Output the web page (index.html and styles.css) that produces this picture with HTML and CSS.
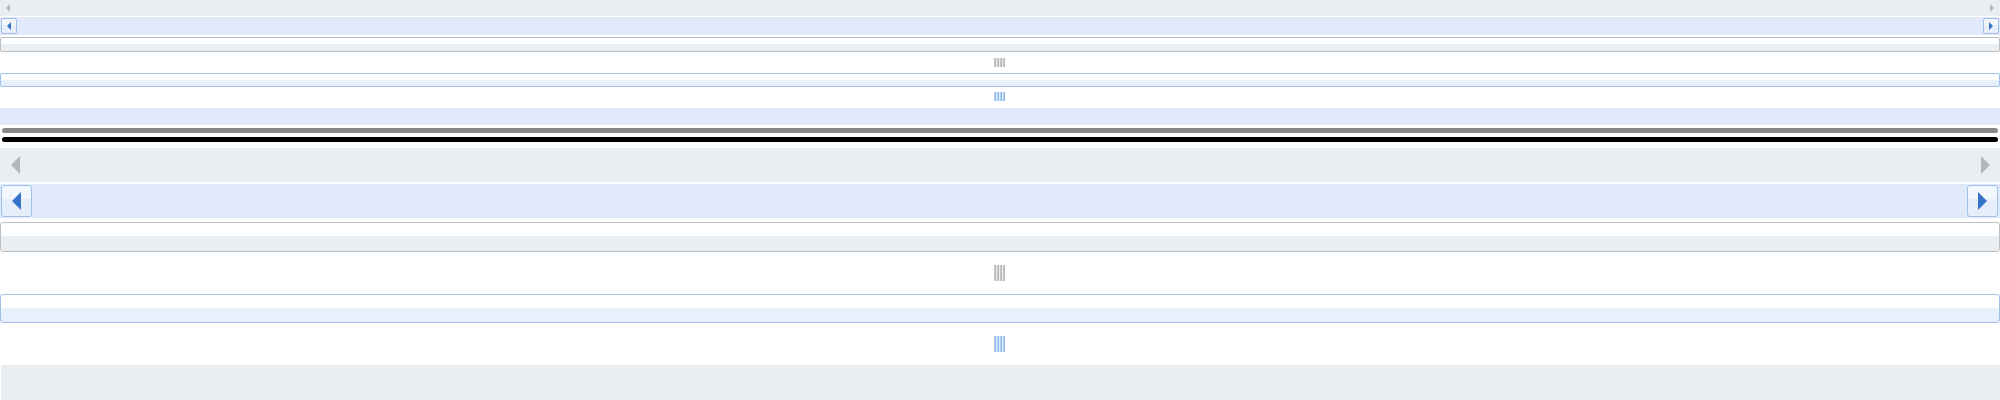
FILE: index.html
```html
<!DOCTYPE html>
<html>
<head>
<meta charset="utf-8">
<link rel="stylesheet" href="styles.css">
</head>
<body>
<div class="page">
  <div class="scroller gray sm">
    <span class="arrow left sm gray-a"></span>
    <span class="arrow right sm gray-a"></span>
  </div>
  <div class="scroller blue sm">
    <span class="btn sm"><span class="arrow left sm blue-a"></span></span>
    <span class="btn sm"><span class="arrow right sm blue-a"></span></span>
  </div>
  <div class="box gray-box sm"></div>
  <div class="splitter sm"><span class="grip gray-grip sm"></span></div>
  <div class="box blue-box sm"></div>
  <div class="splitter sm2"><span class="grip blue-grip sm"></span></div>
  <div class="bar-blue"></div>
  <div class="bar-gray"></div>
  <div class="bar-black"></div>

  <div class="scroller gray lg">
    <span class="arrow left lg gray-a"></span>
    <span class="arrow right lg gray-a"></span>
  </div>
  <div class="scroller blue lg">
    <span class="btn lg"><span class="arrow left lg blue-a"></span></span>
    <span class="btn lg"><span class="arrow right lg blue-a"></span></span>
  </div>
  <div class="box gray-box lg"></div>
  <div class="splitter lg"><span class="grip gray-grip lg"></span></div>
  <div class="box blue-box lg"></div>
  <div class="splitter lg"><span class="grip blue-grip lg"></span></div>
  <div class="bottom-gray"></div>
</div>
</body>
</html>
```
FILE: styles.css
```css
html, body {
  margin: 0;
  padding: 0;
  background: #ffffff;
  overflow: hidden;
}
.page {
  width: 2000px;
  height: 400px;
  display: flex;
  flex-direction: column;
}
.scroller {
  display: flex;
  justify-content: space-between;
  align-items: center;
  box-sizing: border-box;
  flex: none;
}
.scroller.gray { background: #e9eef2; }
.scroller.blue { background: #dfe9f9; }

.scroller.gray.sm { height: 16px; padding: 0 6px 0 6px; }
.scroller.blue.sm { height: 18px; margin-top: 1px; padding: 0 1px 0 1px; }
.scroller.gray.lg { height: 34px; margin-top: 6px; padding: 0 10px 0 11px; }
.scroller.blue.lg { height: 34px; margin-top: 2px; padding: 0 2px 0 1px; }

.btn {
  box-sizing: border-box;
  display: flex;
  align-items: center;
  justify-content: center;
  border: 1px solid #a0c0e8;
  background: linear-gradient(#f2f7fd 0, #f2f7fd 45%, #e6eefa 45%, #e6eefa 100%);
}
.btn.sm { width: 16px; height: 16px; border-radius: 2px; }
.btn.lg { width: 31px; height: 32px; border-radius: 3px; }

.arrow {
  display: block;
  width: 0;
  height: 0;
  border-style: solid;
  border-color: transparent;
}
.arrow.sm { border-width: 4px 0; }
.arrow.lg { border-width: 9px 0; }
.arrow.left.sm { border-right-width: 4px; }
.arrow.right.sm { border-left-width: 4px; }
.arrow.left.lg { border-right-width: 9px; }
.arrow.right.lg { border-left-width: 9px; }
.gray-a.left { border-right-color: #b3b7bb; }
.gray-a.right { border-left-color: #b3b7bb; }
.blue-a.left { border-right-color: #3572c8; }
.blue-a.right { border-left-color: #3572c8; }

.box {
  box-sizing: border-box;
  flex: none;
  border: 1px solid;
}
.gray-box {
  border-color: #bcbfc2;
  background: linear-gradient(#ffffff 0, #ffffff 48%, #e9eef2 48%, #e9eef2 100%);
}
.blue-box {
  border-color: #9fc0e9;
  background: linear-gradient(#ffffff 0, #ffffff 48%, #e8f0fb 48%, #e8f0fb 100%);
}
.gray-box.sm { height: 15px; margin-top: 2px; border-radius: 2px; }
.blue-box.sm { height: 14px; border-radius: 2px; }
.gray-box.lg { height: 30px; margin-top: 4px; border-radius: 3px; }
.blue-box.lg { height: 29px; border-radius: 3px; }

.splitter {
  flex: none;
  display: flex;
  justify-content: center;
  align-items: center;
}
.splitter.sm { height: 21px; }
.splitter.sm2 { height: 20px; }
.splitter.lg { height: 42px; }

.grip {
  display: block;
  width: 11px;
  margin-left: -1px;
}
.grip.sm { height: 9px; margin-top: -1px; }
.grip.lg { height: 16px; }
.gray-grip {
  background: repeating-linear-gradient(90deg, #c7c7c7 0, #c7c7c7 1px, #b8b8b8 1px, #b8b8b8 2px, #eeeeee 2px, #eeeeee 3px);
}
.blue-grip {
  background: repeating-linear-gradient(90deg, #b4d0f2 0, #b4d0f2 1px, #8fb6e8 1px, #8fb6e8 2px, #e3eefb 2px, #e3eefb 3px);
}

.bar-blue {
  flex: none;
  height: 17px;
  margin-top: 1px;
  background: #dfe9f9;
}
.bar-gray {
  flex: none;
  height: 5px;
  margin: 3px 2px 0 2px;
  border-radius: 3px;
  background: #888888;
}
.bar-black {
  flex: none;
  height: 5px;
  margin: 4px 2px 0 2px;
  border-radius: 3px;
  background: #000000;
}
.bottom-gray {
  flex: none;
  height: 35px;
  margin-left: 1px;
  background: #e9eef2;
}
```
